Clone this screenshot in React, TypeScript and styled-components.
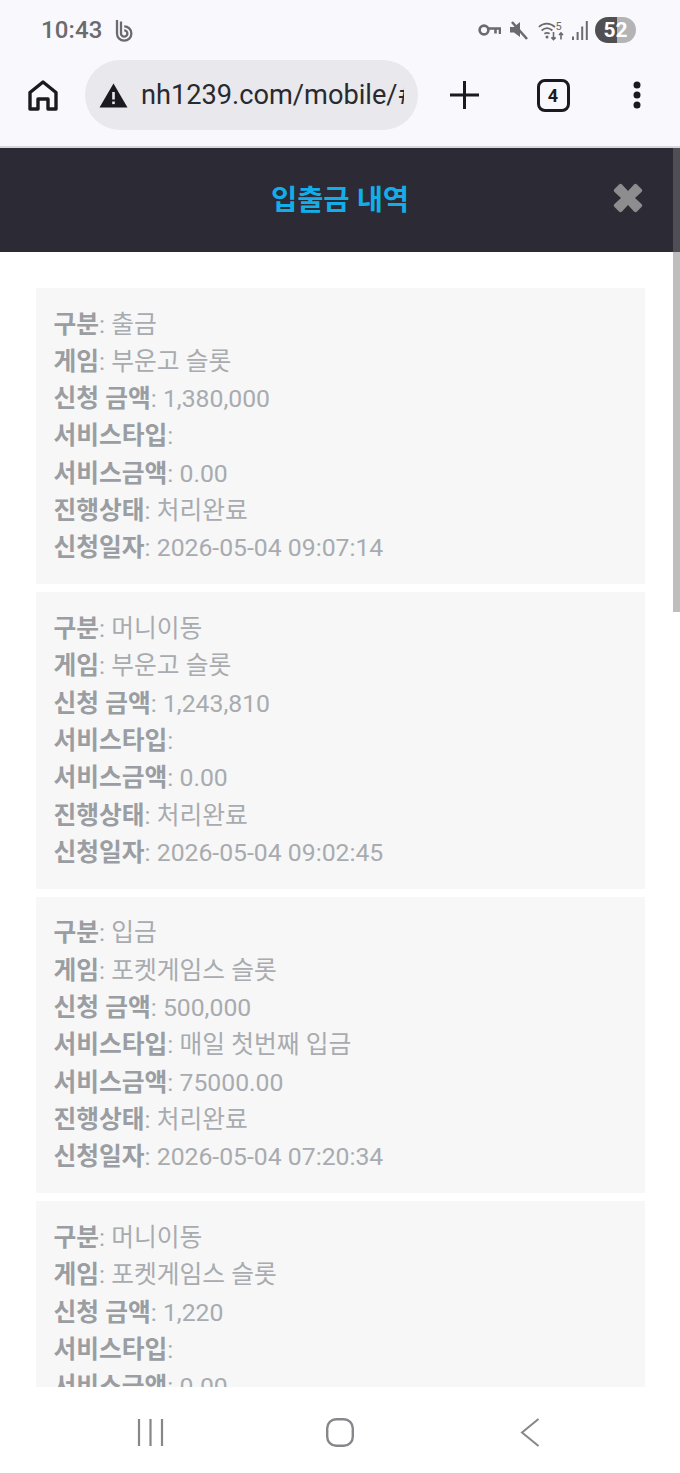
import React from 'react';
import styled, { createGlobalStyle } from 'styled-components';

const GlobalStyle = createGlobalStyle`
  html, body {
    margin: 0;
    padding: 0;
    background: #fff;
  }
  body {
    font-family: Roboto, "Noto Sans CJK KR", sans-serif;
  }
`;

const Screen = styled.div`
  width: 680px;
  height: 1473px;
  display: flex;
  flex-direction: column;
  overflow: hidden;
  background: #fff;
`;

const StatusBar = styled.div`
  height: 60px;
  flex: none;
  box-sizing: border-box;
  padding: 0 44px 0 41px;
  display: flex;
  align-items: center;
  justify-content: space-between;
  background: #f9f9fd;
  color: #6b6b6e;
`;

const StatusGroup = styled.div`
  display: flex;
  align-items: center;
`;

const Clock = styled.span`
  font-size: 24px;
  font-weight: 500;
  letter-spacing: 0.1px;
  margin-right: 13px;
`;

const StatusIcon = styled.svg<{ $gap?: number }>`
  display: block;
  flex: none;
  margin-left: ${props => props.$gap ?? 0}px;
`;

const Battery = styled.div`
  width: 41px;
  height: 26px;
  margin-left: 7px;
  border-radius: 13px;
  display: flex;
  align-items: center;
  justify-content: center;
  font-size: 21px;
  font-weight: 700;
  color: #fff;
  background: linear-gradient(90deg, #505053 0 54%, #b4b4b6 54% 100%);
`;

const Toolbar = styled.div`
  height: 88px;
  flex: none;
  box-sizing: border-box;
  display: flex;
  align-items: center;
  background: #f9f9fd;
  border-bottom: 2px solid #d8d8dc;
  padding-bottom: 16px;
`;

const HomeButton = styled.div`
  width: 85px;
  flex: none;
  display: flex;
  justify-content: center;
  color: #1b1b1f;
`;

const UrlPill = styled.div`
  width: 333px;
  height: 70px;
  flex: none;
  box-sizing: border-box;
  padding-left: 14px;
  border-radius: 35px;
  background: #e8e8ed;
  display: flex;
  align-items: center;
  overflow: hidden;
`;

const UrlText = styled.span`
  margin-left: 13px;
  width: 263px;
  overflow: hidden;
  white-space: nowrap;
  font-size: 27.2px;
  color: #2a2a2e;
`;

const ToolButton = styled.div<{ $width: number }>`
  width: ${props => props.$width}px;
  flex: none;
  display: flex;
  justify-content: center;
  align-items: center;
  color: #1b1b1f;
`;

const TabCount = styled.div`
  width: 27px;
  height: 27px;
  border: 3px solid #1b1b1f;
  border-radius: 8px;
  display: flex;
  align-items: center;
  justify-content: center;
  font-size: 18px;
  font-weight: 700;
`;

const Page = styled.div`
  flex: 1;
  min-height: 0;
  position: relative;
  overflow: hidden;
  background: #fff;
`;

const ModalHeader = styled.div`
  height: 104px;
  box-sizing: border-box;
  padding-bottom: 6px;
  display: flex;
  align-items: center;
  justify-content: center;
  position: relative;
  background: #2b2a35;
`;

const ModalTitle = styled.h1`
  margin: 0;
  font-size: 28.5px;
  font-weight: 700;
  color: #13aeea;
`;

const CloseIcon = styled.svg`
  position: absolute;
  right: 37px;
  top: 35px;
`;

const List = styled.div`
  padding: 36px 35px 0 36px;
  display: flex;
  flex-direction: column;
  gap: 8.2px;
`;

const Card = styled.div`
  background: #f7f7f7;
  padding: 17.5px 18px 17.5px 17.5px;
`;

const Row = styled.div`
  font-size: 24.75px;
  line-height: 37.33px;
  color: #a8abaf;
  white-space: nowrap;
`;

const Label = styled.b`
  font-weight: 700;
  color: #9a9da1;
`;

const ScrollThumb = styled.div`
  position: absolute;
  top: 0;
  right: 0;
  width: 7px;
  height: 464px;
  background: rgba(120, 120, 120, 0.48);
`;

const NavBar = styled.div`
  height: 86px;
  flex: none;
  display: grid;
  grid-template-columns: repeat(3, 190px);
  justify-content: center;
  align-items: center;
  justify-items: center;
  padding-top: 4px;
  box-sizing: border-box;
  background: #fff;
  color: #87878b;
`;

type Entry = {
  kind: string;
  game: string;
  amount: string;
  service: string;
  bonus: string;
  status?: string;
  date?: string;
};

const entries: Entry[] = [
  { kind: '출금', game: '부운고 슬롯', amount: '1,380,000', service: '', bonus: '0.00', status: '처리완료', date: '2026-05-04 09:07:14' },
  { kind: '머니이동', game: '부운고 슬롯', amount: '1,243,810', service: '', bonus: '0.00', status: '처리완료', date: '2026-05-04 09:02:45' },
  { kind: '입금', game: '포켓게임스 슬롯', amount: '500,000', service: '매일 첫번째 입금', bonus: '75000.00', status: '처리완료', date: '2026-05-04 07:20:34' },
  { kind: '머니이동', game: '포켓게임스 슬롯', amount: '1,220', service: '', bonus: '0.00' },
];

const Line: React.FC<{ label: string; value: string }> = ({ label, value }) => (
  <Row>
    <Label>{label}</Label>: {value}
  </Row>
);

const App: React.FC = () => (
  <Screen>
    <GlobalStyle />
    <StatusBar>
      <StatusGroup>
        <Clock>10:43</Clock>
        <StatusIcon width="19" height="23" viewBox="0 0 19 23" fill="none" stroke="currentColor" strokeWidth="2.3">
          <path d="M2 1V14.5A7.2 7.2 0 1 0 9.2 7.3" />
          <path d="M6 2.5V14.5A3.2 3.2 0 1 0 9.2 11.3" />
        </StatusIcon>
      </StatusGroup>
      <StatusGroup>
        <StatusIcon width="23" height="13" viewBox="0 0 23 13" fill="none" stroke="currentColor" strokeWidth="2.6">
          <circle cx="6" cy="6" r="4.4" />
          <path d="M10.5 4.5H22V10M17.5 5V9.5" />
        </StatusIcon>
        <StatusIcon $gap={9} width="18" height="19" viewBox="0 0 18 19">
          <path d="M0 6H4L10 1V16L4 11.5H0Z" fill="currentColor" />
          <path d="M2 1L17 18" stroke="currentColor" strokeWidth="2.6" />
        </StatusIcon>
        <StatusIcon $gap={10} width="27" height="21" viewBox="0 0 27 21" fill="none" stroke="currentColor" strokeWidth="1.7">
          <path d="M0.8 7C5.5 2.6 12 2.6 17 7M3.6 10.5C7 7.6 11 7.6 14.4 10.5M6.4 13.8C8 12.6 10 12.6 11.6 13.8" />
          <circle cx="9" cy="17" r="1.5" fill="currentColor" stroke="none" />
          <path d="M15.5 12V19.5M13.4 17.4L15.5 19.5L17.6 17.4M23 19.5V13M21 15L23 13L25 15" strokeWidth="1.6" />
          <text x="17.5" y="9.5" fontSize="11" fill="currentColor" stroke="none" fontFamily="Roboto">5</text>
        </StatusIcon>
        <StatusIcon $gap={7} width="16" height="19" viewBox="0 0 16 19" fill="currentColor">
          <rect x="0" y="15.5" width="2" height="3.5" />
          <rect x="4.6" y="11" width="2" height="8" />
          <rect x="9.2" y="5.5" width="2" height="13.5" />
          <rect x="13.8" y="0" width="2" height="19" />
        </StatusIcon>
        <Battery>52</Battery>
      </StatusGroup>
    </StatusBar>

    <Toolbar>
      <HomeButton>
        <svg width="30" height="31" viewBox="0 0 30 31" fill="none" stroke="currentColor" strokeWidth="3.4" strokeLinejoin="round">
          <path d="M2 29V12.5L15 2L28 12.5V29H20V19H10V29Z" />
        </svg>
      </HomeButton>
      <UrlPill>
        <svg width="29" height="25" viewBox="0 0 29 25">
          <path d="M14.5 0.5L28.5 24.5H0.5Z" fill="#1b1b1f" />
          <rect x="13.2" y="9" width="2.6" height="7.5" fill="#e8e8ed" />
          <rect x="13.2" y="18.5" width="2.6" height="2.6" fill="#e8e8ed" />
        </svg>
        <UrlText>nh1239.com/mobile/#</UrlText>
      </UrlPill>
      <ToolButton $width={92}>
        <svg width="29" height="28" viewBox="0 0 29 28" stroke="currentColor" strokeWidth="3">
          <path d="M14.5 0V28M0 14H29" />
        </svg>
      </ToolButton>
      <ToolButton $width={86}>
        <TabCount>4</TabCount>
      </ToolButton>
      <ToolButton $width={82}>
        <svg width="10" height="28" viewBox="0 0 10 28" fill="currentColor">
          <circle cx="5" cy="4" r="3.5" />
          <circle cx="5" cy="14" r="3.5" />
          <circle cx="5" cy="24" r="3.5" />
        </svg>
      </ToolButton>
    </Toolbar>

    <Page>
      <ModalHeader>
        <ModalTitle>입출금 내역</ModalTitle>
        <CloseIcon width="30" height="30" viewBox="0 0 30 30">
          <path d="M15 8L21 1.5C22 0.5 23 0.5 24 1.5L28.5 6C29.5 7 29.5 8 28.5 9L22 15L28.5 21C29.5 22 29.5 23 28.5 24L24 28.5C23 29.5 22 29.5 21 28.5L15 22L9 28.5C8 29.5 7 29.5 6 28.5L1.5 24C0.5 23 0.5 22 1.5 21L8 15L1.5 9C0.5 8 0.5 7 1.5 6L6 1.5C7 0.5 8 0.5 9 1.5Z" fill="#8d8d8f" />
        </CloseIcon>
      </ModalHeader>
      <List>
        {entries.map((entry, index) => (
          <Card key={index}>
            <Line label="구분" value={entry.kind} />
            <Line label="게임" value={entry.game} />
            <Line label="신청 금액" value={entry.amount} />
            <Line label="서비스타입" value={entry.service} />
            <Line label="서비스금액" value={entry.bonus} />
            {entry.status && <Line label="진행상태" value={entry.status} />}
            {entry.date && <Line label="신청일자" value={entry.date} />}
          </Card>
        ))}
      </List>
      <ScrollThumb />
    </Page>

    <NavBar>
      <svg width="27" height="27" viewBox="0 0 27 27" stroke="currentColor" strokeWidth="2.2">
        <path d="M2 0V27M13.5 0V27M25 0V27" />
      </svg>
      <svg width="28" height="29" viewBox="0 0 28 29" fill="none" stroke="currentColor" strokeWidth="2.4">
        <rect x="1.2" y="1.2" width="25.6" height="26.6" rx="9" />
      </svg>
      <svg width="20" height="29" viewBox="0 0 20 29" fill="none" stroke="currentColor" strokeWidth="2">
        <path d="M18.5 1L2 14.5L18.5 28" />
      </svg>
    </NavBar>
  </Screen>
);

export default App;
